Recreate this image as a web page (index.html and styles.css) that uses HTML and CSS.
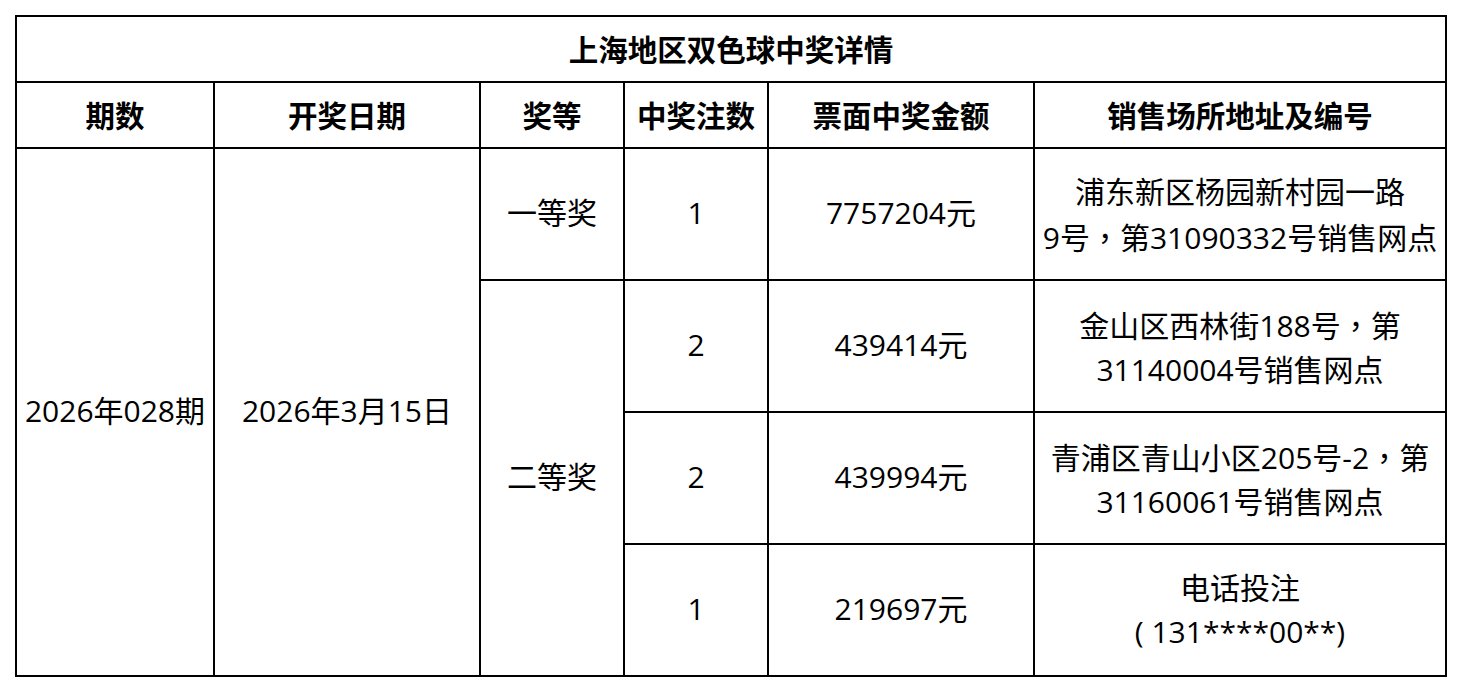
FILE: index.html
```html
<!DOCTYPE html>
<html lang="zh-CN">
<head>
<meta charset="utf-8">
<title>上海地区双色球中奖详情</title>
<link rel="stylesheet" href="styles.css">
</head>
<body>
<div class="sheet" role="table">
  <div class="cell title" role="cell">上海地区双色球中奖详情</div>

  <div class="cell head" role="columnheader">期数</div>
  <div class="cell head" role="columnheader">开奖日期</div>
  <div class="cell head" role="columnheader">奖等</div>
  <div class="cell head" role="columnheader">中奖注数</div>
  <div class="cell head" role="columnheader">票面中奖金额</div>
  <div class="cell head" role="columnheader">销售场所地址及编号</div>

  <div class="cell span-issue" role="cell">2026年028期</div>
  <div class="cell span-date" role="cell">2026年3月15日</div>
  <div class="cell" role="cell">一等奖</div>
  <div class="cell" role="cell">1</div>
  <div class="cell" role="cell">7757204元</div>
  <div class="cell addr" role="cell">浦东新区杨园新村园一路<br>9号<span class="punct" lang="zh-TW">，</span>第31090332号销售网点</div>

  <div class="cell span-level" role="cell">二等奖</div>
  <div class="cell" role="cell">2</div>
  <div class="cell" role="cell">439414元</div>
  <div class="cell addr" role="cell">金山区西林街188号<span class="punct" lang="zh-TW">，</span>第<br>31140004号销售网点</div>

  <div class="cell" role="cell">2</div>
  <div class="cell" role="cell">439994元</div>
  <div class="cell addr" role="cell">青浦区青山小区205号-2<span class="punct" lang="zh-TW">，</span>第<br>31160061号销售网点</div>

  <div class="cell" role="cell">1</div>
  <div class="cell" role="cell">219697元</div>
  <div class="cell addr" role="cell">电话投注<br>( 131****00**)</div>
</div>
</body>
</html>
```
FILE: styles.css
```css
html, body {
  margin: 0;
  padding: 0;
  background: #ffffff;
}

body {
  font-family: "Open Sans", "Noto Sans CJK SC", sans-serif;
  color: #000000;
}

.sheet {
  margin: 15px 0 0 15px;
  width: 1432px;
  box-sizing: border-box;
  display: grid;
  grid-template-columns: 196px 264px 142px 142px 264px 410px;
  grid-template-rows: 64px 64px 130px 130px 130px 130px;
  gap: 2px;
  padding: 2px;
  background: #000000;
}

.cell {
  background: #ffffff;
  display: flex;
  align-items: center;
  justify-content: center;
  text-align: center;
  font-size: 30px;
  line-height: 44px;
  white-space: nowrap;
  padding-bottom: 3px;
  box-sizing: border-box;
}

.addr {
  display: block;
  align-self: stretch;
  padding: 21px 0 24px;
}

.punct {
  font-family: "Noto Sans CJK TC", sans-serif;
}

.title {
  grid-column: 1 / 7;
  font-weight: 700;
  font-size: 29.5px;
  font-family: "Noto Sans CJK SC", sans-serif;
}

.head {
  font-weight: 700;
  font-size: 29.5px;
  font-family: "Noto Sans CJK SC", sans-serif;
}

.span-issue {
  grid-column: 1;
  grid-row: 3 / 7;
}

.span-date {
  grid-column: 2;
  grid-row: 3 / 7;
}

.span-level {
  grid-column: 3;
  grid-row: 4 / 7;
}
```
